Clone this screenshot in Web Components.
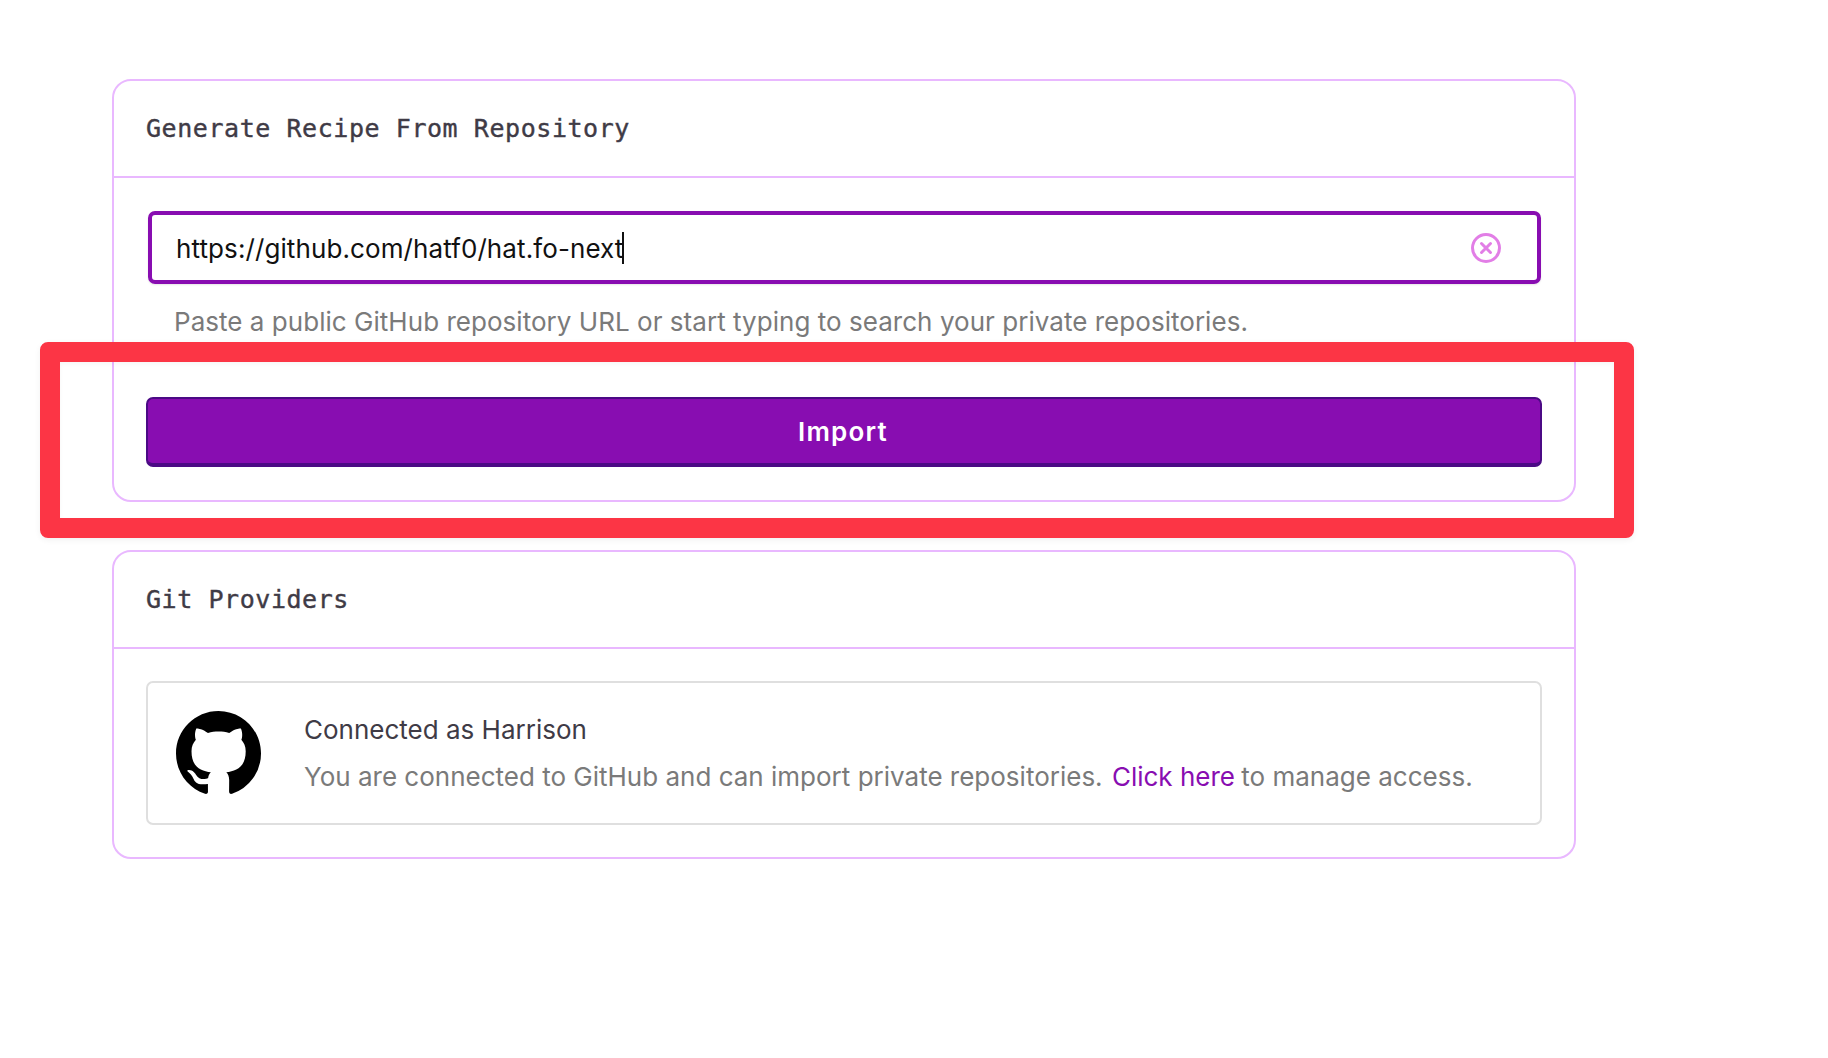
<!DOCTYPE html>
<html>
<head>
<meta charset="utf-8">
<style>
  html, body { margin: 0; background: #fff; }
  body { font-family: Inter, "Liberation Sans", sans-serif; }
  #page { position: relative; width: 1828px; height: 1058px; padding: 79px 0 0 112px; box-sizing: border-box; overflow: hidden; }
  #stack { width: 1464px; display: flex; flex-direction: column; gap: 48px; }
</style>
</head>
<body>
<div id="page">
  <div id="stack">
    <panel-card heading="Generate Recipe From Repository">
      <repo-input value="https://github.com/hatf0/hat.fo-next" help="Paste a public GitHub repository URL or start typing to search your private repositories."></repo-input>
      <import-button>Import</import-button>
    </panel-card>
    <panel-card heading="Git Providers">
      <provider-row title="Connected as Harrison">
        You are connected to GitHub and can import private repositories. <a href="#">Click here</a> to manage access.
      </provider-row>
    </panel-card>
  </div>
  <red-highlight></red-highlight>
</div>

<script>
class PanelCard extends HTMLElement {
  constructor() {
    super();
    this.attachShadow({ mode: "open" });
  }
  connectedCallback() {
    this.shadowRoot.innerHTML = `
      <style>
        :host { display: block; border: 2px solid #e9b8ff; border-radius: 19px; background: #fff; }
        .head {
          height: 97px; padding: 0 32px; display: flex; align-items: center; box-sizing: border-box;
          border-bottom: 2px solid #e9b8ff;
          font-family: "DejaVu Sans Mono", monospace; font-size: 25px; letter-spacing: 0.56px; color: #3f3b46;
          -webkit-text-stroke: 0.4px #3f3b46;
        }
        .body { padding: 33px 31px 33px 32px; }
      </style>
      <div class="head">${this.getAttribute("heading")}</div>
      <div class="body"><slot></slot></div>
    `;
  }
}

class RepoInput extends HTMLElement {
  constructor() {
    super();
    this.attachShadow({ mode: "open" });
  }
  connectedCallback() {
    this.shadowRoot.innerHTML = `
      <style>
        :host { display: block; }
        .box {
          height: 73px; margin: 0 2px; padding: 0 35px 0 24px; box-sizing: border-box;
          display: flex; align-items: center; justify-content: space-between;
          border: 4px solid #880db1; border-radius: 7px; box-shadow: 0 1px 2px rgb(0 0 0 / 0.1);
          font-size: 26px; letter-spacing: 0.1px; color: #111;
        }
        .val { display: flex; align-items: center; padding-top: 1px; }
        .caret { width: 2px; height: 32px; background: #111; margin-left: -1px; }
        svg { width: 32px; height: 32px; display: block; }
        .help { margin: 19px 0 0 28px; font-size: 26px; letter-spacing: 0.035px; line-height: 38px; color: #7a7a7a; }
      </style>
      <div class="box">
        <span class="val">${this.getAttribute("value")}<span class="caret"></span></span>
        <svg viewBox="0 0 32 32" fill="none" stroke="#e27ee6" stroke-width="3" stroke-linecap="round">
          <circle cx="16" cy="16" r="13.5"/>
          <path d="M11.5 11.5l9 9M20.5 11.5l-9 9"/>
        </svg>
      </div>
      <div class="help">${this.getAttribute("help")}</div>
    `;
  }
}

class ImportButton extends HTMLElement {
  constructor() {
    super();
    this.attachShadow({ mode: "open" });
  }
  connectedCallback() {
    this.shadowRoot.innerHTML = `
      <style>
        :host { display: block; margin-top: 56px; margin-right: 1px; }
        button {
          width: 100%; height: 70px; display: block; box-sizing: border-box; padding: 0 2px 0 0;
          background: #880db1; color: #fff; border: 2px solid #4b0a85; border-bottom-width: 4px; border-radius: 7px;
          font: 600 26px Inter, "Liberation Sans", sans-serif; letter-spacing: 1.2px;
        }
      </style>
      <button><slot></slot></button>
    `;
  }
}

class ProviderRow extends HTMLElement {
  constructor() {
    super();
    this.attachShadow({ mode: "open" });
  }
  connectedCallback() {
    this.shadowRoot.innerHTML = `
      <style>
        :host { display: block; margin: -1px 1px -1px 0; }
        .row {
          height: 144px; box-sizing: border-box; padding: 0 28px;
          display: flex; align-items: center; gap: 43px;
          border: 2px solid #dfdfdf; border-radius: 7px;
        }
        svg { width: 85px; height: 85px; flex: none; display: block; }
        .title { font-size: 26px; line-height: 40px; color: #3f3b46; }
        .text { font-size: 26px; line-height: 40px; margin-top: 7px; color: #7a7a7a; }
        ::slotted(a) { color: #880db1; text-decoration: none; margin: 0 -1px 0 2px; }
      </style>
      <div class="row">
        <svg viewBox="0 0 16 16" fill="#000">
          <path d="M8 0C3.58 0 0 3.58 0 8c0 3.54 2.29 6.53 5.47 7.59.4.07.55-.17.55-.38 0-.19-.01-.82-.01-1.49-2.01.37-2.53-.49-2.69-.94-.09-.23-.48-.94-.82-1.13-.28-.15-.68-.52-.01-.53.63-.01 1.08.58 1.23.82.72 1.21 1.87.87 2.33.66.07-.52.28-.87.51-1.07-1.78-.2-3.64-.89-3.64-3.95 0-.87.31-1.59.82-2.15-.08-.2-.36-1.02.08-2.12 0 0 .67-.21 2.2.82.64-.18 1.32-.27 2-.27.68 0 1.36.09 2 .27 1.53-1.04 2.2-.82 2.2-.82.44 1.1.16 1.92.08 2.12.51.56.82 1.27.82 2.15 0 3.07-1.87 3.75-3.65 3.95.29.25.54.73.54 1.48 0 1.07-.01 1.93-.01 2.2 0 .21.15.46.55.38A8.013 8.013 0 0016 8c0-4.42-3.58-8-8-8z"/>
        </svg>
        <div>
          <div class="title">${this.getAttribute("title")}</div>
          <div class="text"><slot></slot></div>
        </div>
      </div>
    `;
  }
}

class RedHighlight extends HTMLElement {
  constructor() {
    super();
    this.attachShadow({ mode: "open" });
  }
  connectedCallback() {
    this.shadowRoot.innerHTML = `
      <style>
        :host {
          position: absolute; left: 40px; top: 342px; width: 1594px; height: 196px; box-sizing: border-box;
          border: 20px solid #fc3545; border-radius: 8px; pointer-events: none;
          box-shadow: 0 2px 6px rgb(0 0 0 / 0.06), inset 0 2px 4px rgb(0 0 0 / 0.04);
        }
      </style>
    `;
  }
}

customElements.define("panel-card", PanelCard);
customElements.define("repo-input", RepoInput);
customElements.define("import-button", ImportButton);
customElements.define("provider-row", ProviderRow);
customElements.define("red-highlight", RedHighlight);
</script>
</body>
</html>
